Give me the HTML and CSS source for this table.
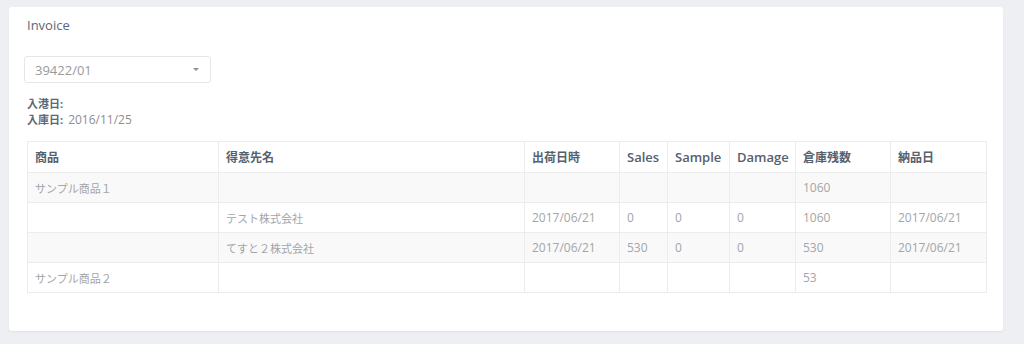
FILE: index.html
```html
<!DOCTYPE html>
<html lang="ja">
<head>
<meta charset="utf-8">
<link rel="stylesheet" href="styles.css">
</head>
<body>
<div class="card">
  <div class="card-title">Invoice</div>
  <div class="select">
    <span class="select-value">39422/01</span>
    <span class="caret"></span>
  </div>
  <div class="meta">
    <div class="meta-row"><span class="meta-label">入港日:</span></div>
    <div class="meta-row"><span class="meta-label">入庫日:</span><span class="meta-value">2016/11/25</span></div>
  </div>
  <table class="grid">
    <colgroup>
      <col class="c1"><col class="c2"><col class="c3"><col class="c4"><col class="c5"><col class="c6"><col class="c7"><col class="c8">
    </colgroup>
    <thead>
      <tr><th>商品</th><th>得意先名</th><th>出荷日時</th><th class="en">Sales</th><th class="en">Sample</th><th class="en">Damage</th><th>倉庫残数</th><th>納品日</th></tr>
    </thead>
    <tbody>
      <tr class="odd"><td class="ja">サンプル商品１</td><td></td><td></td><td></td><td></td><td></td><td>1060</td><td></td></tr>
      <tr><td></td><td class="ja">テスト株式会社</td><td>2017/06/21</td><td>0</td><td>0</td><td>0</td><td>1060</td><td>2017/06/21</td></tr>
      <tr class="odd"><td></td><td class="ja">てすと２株式会社</td><td>2017/06/21</td><td>530</td><td>0</td><td>0</td><td>530</td><td>2017/06/21</td></tr>
      <tr><td class="ja">サンプル商品２</td><td></td><td></td><td></td><td></td><td></td><td>53</td><td></td></tr>
    </tbody>
  </table>
</div>
</body>
</html>
```
FILE: styles.css
```css
html, body {
  margin: 0;
  padding: 0;
  background: #edeff3;
  font-family: "Open Sans", "Noto Sans CJK JP", sans-serif;
}
body {
  padding: 7px 21px 0 9px;
  height: 344px;
  box-sizing: border-box;
}
.card {
  background: #fff;
  border-radius: 3px;
  box-shadow: 0 1px 2px rgba(0, 0, 0, 0.06);
  height: 324px;
  box-sizing: border-box;
  padding: 9px 17px 0 18px;
}
.card-title {
  font-size: 13px;
  line-height: 18px;
  color: #5a6878;
}
.select {
  margin: 22px 0 0 -3px;
  width: 187px;
  height: 27px;
  box-sizing: border-box;
  border: 1px solid #e6e6e6;
  border-radius: 3px;
  display: flex;
  align-items: center;
  justify-content: space-between;
  padding: 0 10px 0 10px;
}
.select-value {
  font-size: 13px;
  color: #9a9a9a;
}
.caret {
  width: 0;
  height: 0;
  border-left: 3px solid transparent;
  border-right: 3px solid transparent;
  border-top: 3px solid #8a919a;
  margin-right: 1px;
}
.meta {
  margin-top: 13px;
  font-size: 11px;
  line-height: 16px;
}
.meta-label {
  color: #5f6774;
  font-weight: bold;
}
.meta-value {
  font-size: 12px;
  color: #8e8e8e;
  margin-left: 5px;
}
.grid {
  margin-top: 13px;
  width: 959px;
  border-collapse: collapse;
  table-layout: fixed;
  font-size: 12px;
}
.c1 { width: 191px; }
.c2 { width: 306px; }
.c3 { width: 95px; }
.c4 { width: 48px; }
.c5 { width: 62px; }
.c6 { width: 66px; }
.c7 { width: 95px; }
.c8 { width: 96px; }
.grid th, .grid td {
  border: 1px solid #ececec;
  text-align: left;
  padding: 0 7px;
  white-space: nowrap;
  overflow: hidden;
}
.grid th {
  height: 30px;
  font-size: 12px;
  font-weight: bold;
  color: #55616f;
}
.grid th.en {
  font-size: 13px;
  font-weight: 600;
}
.grid td {
  height: 29px;
  color: #a2a5a9;
}
.grid td.ja {
  font-size: 11px;
}
.grid tr.odd td {
  background: #f9f9f9;
}
```
